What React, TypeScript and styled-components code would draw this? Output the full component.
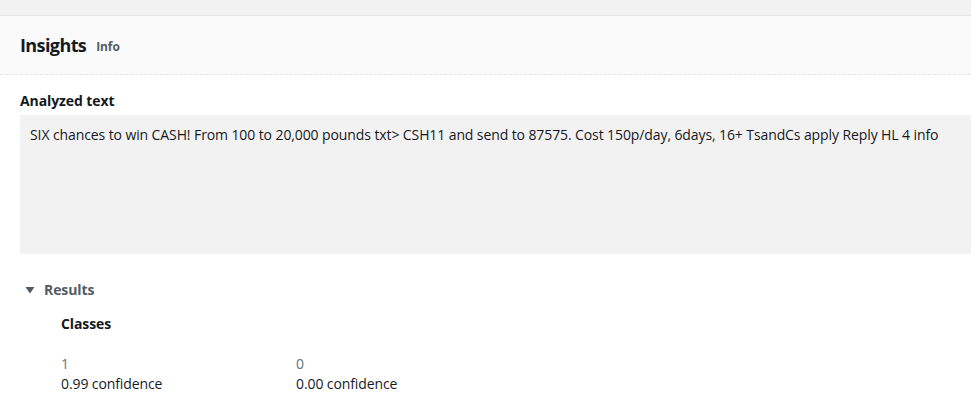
import React from "react";
import styled, { createGlobalStyle } from "styled-components";

const Global = createGlobalStyle`
  html, body { margin: 0; padding: 0; background: #ffffff; }
  body { font-family: "Open Sans", "Noto Sans", Arial, sans-serif; color: #16191f; letter-spacing: -0.1px; }
`;

const Page = styled.div`
  width: 971px;
  height: 403px;
  overflow: hidden;
  display: flex;
  flex-direction: column;
`;

const TopBand = styled.div`
  height: 15px;
  background: #f2f2f2;
  border-bottom: 1px solid #e4e4e4;
`;

const Header = styled.div`
  height: 58px;
  background: #fafafa;
  border-bottom: 1px dashed #e2e2e2;
  display: flex;
  align-items: center;
  padding: 0 20px;
  gap: 10px;
`;

const Title = styled.h2`
  margin: 0;
  font-size: 18px;
  font-weight: 700;
  letter-spacing: -0.6px;
  color: #16191f;
`;

const InfoLink = styled.span`
  font-size: 12px;
  font-weight: 700;
  color: #545b64;
  margin-top: 3px;
`;

const Body = styled.div`
  padding: 16px 0 0 20px;
  display: flex;
  flex-direction: column;
`;

const Label = styled.div`
  font-size: 14px;
  font-weight: 700;
  line-height: 20px;
  color: #16191f;
`;

const TextBox = styled.div`
  margin-top: 4px;
  height: 139px;
  background: #f2f2f2;
  padding: 10px 10px;
  box-sizing: border-box;
  font-size: 14px;
  line-height: 20px;
  color: #16191f;
`;

const Expander = styled.div`
  margin-top: 26px;
  display: flex;
  align-items: center;
  gap: 9px;
  padding-left: 5px;
  font-size: 14px;
  font-weight: 700;
  color: #545b64;
  line-height: 20px;
`;

const Caret = styled.svg`
  width: 10px;
  height: 10px;
  display: block;
`;

const Results = styled.div`
  padding-left: 41px;
  margin-top: 14px;
  display: flex;
  flex-direction: column;
`;

const ClassesGrid = styled.div`
  margin-top: 20px;
  display: grid;
  grid-template-columns: 235px 235px;
`;

const ClassCell = styled.div`
  display: flex;
  flex-direction: column;
`;

const ClassName = styled.div`
  font-size: 14px;
  line-height: 20px;
  color: #687078;
`;

const Confidence = styled.div`
  font-size: 14px;
  line-height: 20px;
  color: #16191f;
`;

const classes = [
  { name: "1", conf: "0.99" },
  { name: "0", conf: "0.00" },
];

export default function App() {
  return (
    <Page>
      <Global />
      <TopBand />
      <Header>
        <Title>Insights</Title>
        <InfoLink>Info</InfoLink>
      </Header>
      <Body>
        <Label>Analyzed text</Label>
        <TextBox>
          SIX chances to win CASH! From 100 to 20,000 pounds txt&gt; CSH11 and send to 87575. Cost 150p/day, 6days, 16+ TsandCs apply Reply HL 4 info
        </TextBox>
        <Expander>
          <Caret viewBox="0 0 10 10">
            <path d="M0.5 2 L9.5 2 L5 8.5 Z" fill="#545b64" />
          </Caret>
          Results
        </Expander>
        <Results>
          <Label>Classes</Label>
          <ClassesGrid>
            {classes.map((c) => (
              <ClassCell key={c.name}>
                <ClassName>{c.name}</ClassName>
                <Confidence>{c.conf} confidence</Confidence>
              </ClassCell>
            ))}
          </ClassesGrid>
        </Results>
      </Body>
    </Page>
  );
}
